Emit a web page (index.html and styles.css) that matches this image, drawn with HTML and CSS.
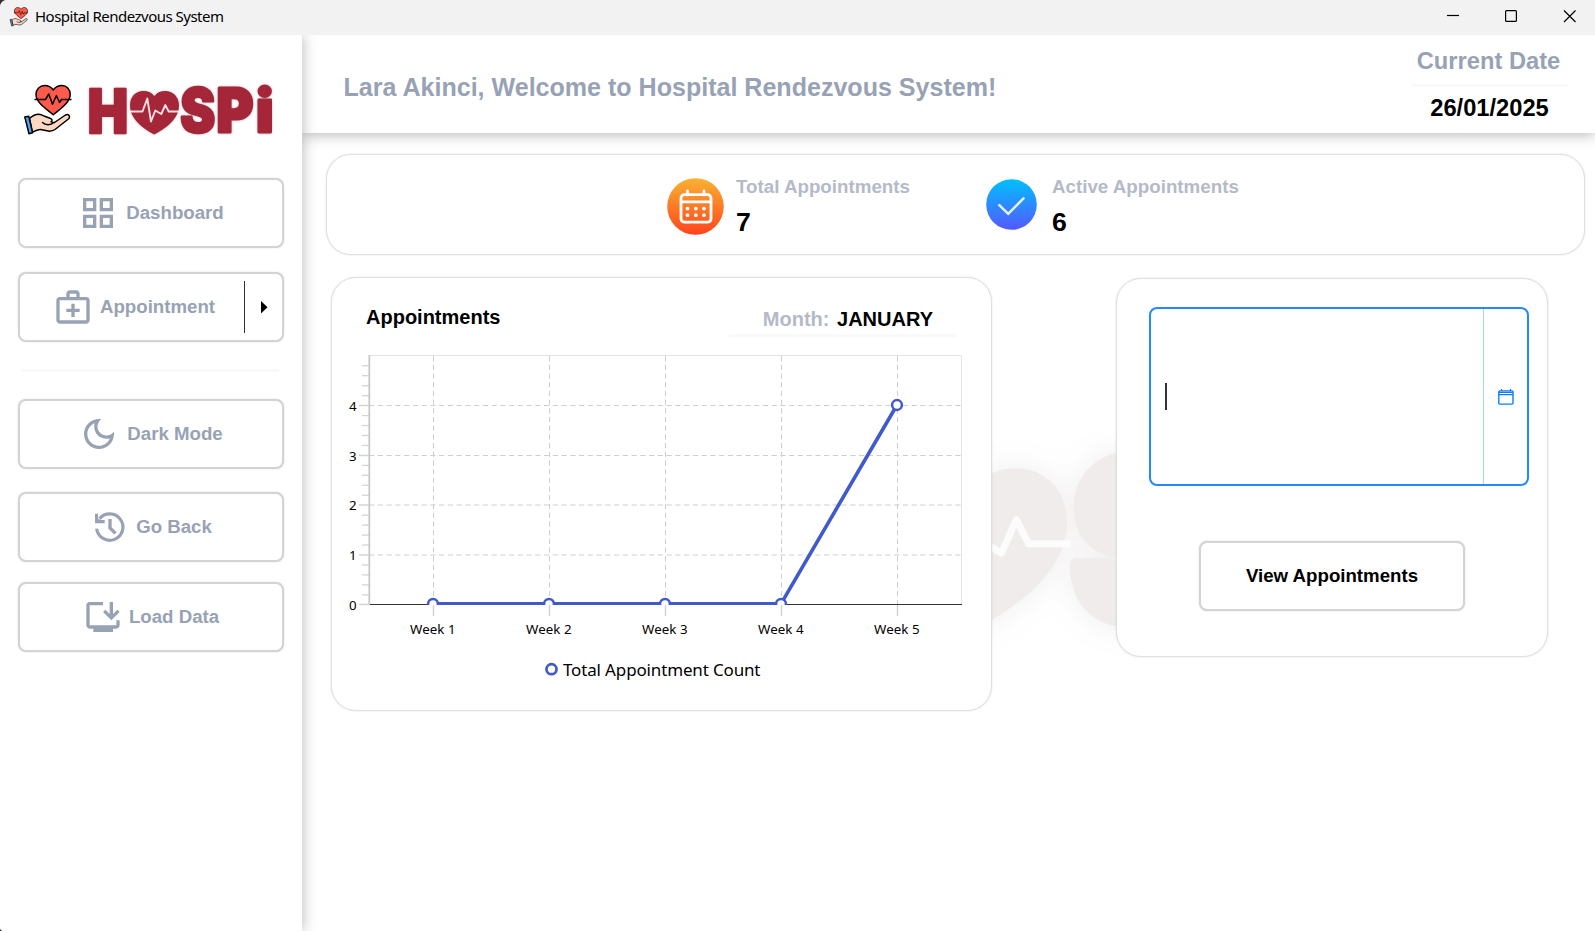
FILE: index.html
```html
<!DOCTYPE html>
<html lang="en">
<head>
<meta charset="utf-8">
<title>Hospital Rendezvous System</title>
<link rel="stylesheet" href="styles.css">
</head>
<body>
<svg class="defs" width="0" height="0" aria-hidden="true">
  <defs>
    <symbol id="hand-heart" viewBox="22 82 52 54">
      <path d="M53.3 114.8C48 110 36 103 36 94.500C36 89 40 85.600 44.500 85.600C48.500 85.600 51.500 87.500 53.300 90C55 87.500 58 85.600 62 85.600C66.500 85.600 70.200 89 70.200 94.500C70.200 103 58.500 110 53.300 114.800Z" fill="#ff5a4b" stroke="#000" stroke-width="1.500" stroke-linejoin="round"/>
      <path d="M34.500 99.500H45.500L48.800 94L52.500 104.200L56.400 95.500L59.500 102.500L61.500 99.500H71.500" fill="none" stroke="#000" stroke-width="1.500" stroke-linejoin="round"/>
      <path d="M29.500 118.500C35 113.500 40 113.300 44 116L50 118.200C52.500 119 52.600 121 51 121.800L54.500 122.500L65.500 115C68.500 113.500 70.500 116 69 118.500L55 129.500C52.500 131.200 50 131.500 47 130.800L40.500 129.500C37.500 129.300 34.500 131 32.300 132.200Z" fill="#fcd8c2" stroke="#000" stroke-width="1.500" stroke-linejoin="round"/>
      <path d="M42.500 122.500C45.500 125.500 50.500 125.500 54 122.500" fill="none" stroke="#000" stroke-width="1.500" stroke-linecap="round"/>
      <path d="M24.800 117L28.800 116.300L32.600 132.800L29 133.800Z" fill="#4aa5f5" stroke="#000" stroke-width="1.500" stroke-linejoin="round"/>
    </symbol>
    <g id="heart-pulse">
      <path fill="currentColor" d="M154.300 134.600C148 131 130 121.500 130 105.500C130 96.500 136 91.100 143.200 91.100C148 91.100 152.200 93 154.300 96.300C156.500 93 160.500 91.100 165.300 91.100C172.500 91.100 179 96.500 179 105.500C179 121.500 160.500 131 154.300 134.600Z"/>
      <path fill="none" stroke="#fff" stroke-opacity=".85" stroke-width="1.900" stroke-linejoin="round" d="M129 111.500H142.500L147.300 98.500L151 121.500L155.300 110.500L161.300 114L165.300 105L168.700 111.500H180"/>
    </g>
    <linearGradient id="orange" x1="0" y1="0" x2="0" y2="1"><stop offset="0" stop-color="#f9b233"/><stop offset="1" stop-color="#ff441c"/></linearGradient>
    <linearGradient id="blue" x1="0" y1="0" x2="0" y2="1"><stop offset="0" stop-color="#00c0ff"/><stop offset="1" stop-color="#5558ff"/></linearGradient>
  </defs>
</svg>
<div class="window">
  <div class="titlebar">
    <svg class="app-icon" viewBox="22 82 52 54"><use href="#hand-heart" x="22" y="82" width="52" height="54"/></svg>
    <svg class="app-title" width="200" height="34"><text x="0" y="22.300" textLength="189">Hospital Rendezvous System</text></svg>
    <svg class="controls" width="160" height="34" fill="none" stroke="#000" stroke-width="1.200">
      <path d="M12 15.500h12"/><rect x="70.600" y="10.600" width="10.800" height="10.800" rx="1"/><path d="M129 10.500l11.500 11.500M140.500 10.500L129 22"/>
    </svg>
  </div>
  <div class="app">
    <aside class="sidebar">
      <svg class="logo" viewBox="0 65 302 90" width="302" height="90">
        <use href="#hand-heart" x="22" y="82" width="52" height="54"/>
        <g class="wordmark">
          <text transform="translate(87.800 132.600) scale(.88 1)">H</text>
          <use href="#heart-pulse"/>
          <text transform="translate(180.300 132.300) scale(.86 .99)">S</text>
          <text class="heavy" transform="translate(216.500 132.300) scale(.92 1)">P</text>
          <text class="heavy" transform="translate(256 132.300) scale(.97 .96)">i</text>
        </g>
      </svg>
      <nav class="menu">
        <button class="btn"><svg class="ico" viewBox="0 0 24 24"><path d="M3 3v8h8V3H3zm6 6H5V5h4v4zm-6 4v8h8v-8H3zm6 6H5v-4h4v4zm4-16v8h8V3h-8zm6 6h-4V5h4v4zm-6 4v8h8v-8h-8zm6 6h-4v-4h4v4z"/></svg>Dashboard</button>
        <div class="btn split">
          <span class="split-label"><svg class="ico" viewBox="0 0 24 24"><path d="M20 6h-4V4c0-1.100-.9-2-2-2h-4c-1.100 0-2 .9-2 2v2H4c-1.100 0-2 .9-2 2v12c0 1.100.9 2 2 2h16c1.100 0 2-.9 2-2V8c0-1.100-.9-2-2-2zM10 4h4v2h-4V4zm10 16H4V8h16v12z"/><path d="M13 10h-2v3H8v2h3v3h2v-3h3v-2h-3z"/></svg>Appointment</span>
          <span class="split-arrow"><svg width="7" height="13"><path d="M0 0L6.500 6.300L0 12.600z" fill="#000"/></svg></span>
        </div>
        <div class="rule"></div>
        <button class="btn dark"><svg class="ico" viewBox="0 0 24 24"><path d="M9.370 5.510C9.190 6.150 9.100 6.820 9.100 7.500c0 4.080 3.320 7.400 7.400 7.400.68 0 1.350-.09 1.990-.27C17.450 17.190 14.930 19 12 19c-3.860 0-7-3.140-7-7 0-2.930 1.810-5.450 4.370-6.490zM12 3c-4.970 0-9 4.030-9 9s4.030 9 9 9 9-4.030 9-9c0-.46-.04-.92-.1-1.360-.98 1.370-2.580 2.260-4.400 2.260-2.980 0-5.400-2.420-5.400-5.400 0-1.810.89-3.420 2.260-4.400C12.920 3.040 12.460 3 12 3z"/></svg>Dark Mode</button>
        <button class="btn back"><svg class="ico" viewBox="0 0 24 24"><path d="M4 13A7.900 7.900 0 1 0 5.700 7.100" fill="none" stroke="currentColor" stroke-width="1.900"/><path d="M3 4h1.800v3.200L6.500 7.800H8.800V9.700H3z"/><path d="M12 7.200v5.400l3.300 3.200" fill="none" stroke="currentColor" stroke-width="2"/></svg>Go Back</button>
        <button class="btn load"><svg class="ico" viewBox="0 0 24 24"><path d="M20 17H4V5h8V3H4c-1.110 0-2 .89-2 2v12c0 1.100.89 2 2 2h3l-.7.800V21h11.700v-1.200L17 19h3c1.100 0 2-.9 2-2v-3h-2v3zM17 14l5-5-1.410-1.410L18 10.170V3h-2v7.170l-2.590-2.580L12 9l5 5z"/><path d="M6.300 18h11.700v3H6.300z"/></svg>Load Data</button>
      </nav>
    </aside>
    <main class="main">
      <header class="header">
        <h1>Lara Akinci, Welcome to Hospital Rendezvous System!</h1>
        <div class="date"><span class="date-label">Current Date</span><span class="date-rule"></span><span class="date-value">26/01/2025</span></div>
      </header>
      <div class="content">
        <svg class="watermark" viewBox="880 430 360 250" width="360" height="250">
          <g class="wm" transform="translate(1067 468) scale(3.700) translate(-179 -91)">
            <use href="#heart-pulse"/>
            <text transform="translate(179.600 132.300) scale(.86 .99)">S</text>
          </g>
        </svg>
        <section class="card stats">
          <div class="stat">
            <svg width="57" height="57" viewBox="0 0 57 57"><circle cx="28.500" cy="28.500" r="28.300" fill="url(#orange)"/><g fill="none" stroke="#fff" stroke-width="2.800"><rect x="14" y="16.600" width="30" height="27.600" rx="3.500"/><path d="M14 23.800h30M20.500 13v4M37 13v4" stroke-linecap="round"/></g><path d="M20.500 30.600h0M28.800 30.600h0M37 30.600h0M20.500 37.200h0M28.800 37.200h0M37 37.200h0" stroke="#fff" stroke-width="3.800" stroke-linecap="round"/></svg>
            <div class="stat-text"><span>Total Appointments</span><b>7</b></div>
          </div>
          <div class="stat second">
            <svg width="51" height="51" viewBox="0 0 51 51"><circle cx="25.500" cy="25.500" r="25.300" fill="url(#blue)"/><path d="M13.300 26.200l8.900 8.600L37.500 19.400" fill="none" stroke="#e6f4ff" stroke-width="2.500" stroke-linecap="round"/></svg>
            <div class="stat-text"><span>Active Appointments</span><b>6</b></div>
          </div>
        </section>
        <div class="row">
          <section class="card chart">
            <div class="chart-head"><h2>Appointments</h2><div class="month"><span>Month:</span> JANUARY</div></div>
            <svg id="plot" viewBox="332 345 659 350" width="659" height="350"></svg>
          </section>
          <section class="card picker">
            <div class="field"><div class="field-input"><i class="caret"></i></div><div class="field-btn"><svg width="16" height="16" viewBox="0 0 16 16" fill="none" stroke="#0a7cff"><rect x=".8" y="1.900" width="14.200" height="13.200" rx="1" stroke-width="1.400"/><path d="M1 3.300h14M1 5.700h14M3.500 0v2M12.500 0v2" stroke-width="1.200"/></svg></div></div>
            <button class="btn view">View Appointments</button>
          </section>
        </div>
      </div>
    </main>
  </div>
</div>
<script src="chart.js"></script>
</body>
</html>
```
FILE: styles.css
```css
* { box-sizing: border-box; }
body { margin: 0; background: #3a2c2c; font-family: "Liberation Sans", Arial, sans-serif; }
.defs { position: absolute; }
.window { width: 1595px; height: 931px; display: flex; flex-direction: column; overflow: hidden; border-radius: 7px 0 0 4px; background: #fff; }
.titlebar { height: 35px; flex: none; background: #f2f2f2; display: flex; align-items: flex-start; padding-left: 9px; position: relative; z-index: 3; }
.app-icon { width: 20px; height: 21px; margin-top: 6px; }
.app-title { margin-left: 6px; font: 15px "Noto Sans", "Open Sans", sans-serif; }
.controls { margin-left: auto; margin-right: 0; }
.app { flex: 1; display: flex; min-height: 0; }
.sidebar { width: 302px; flex: none; background: #fff; box-shadow: 0 0 14px rgba(0,0,0,.3); position: relative; z-index: 2; padding-top: 30px; }
.logo { display: block; overflow: visible; }
.wordmark { color: #a52639; fill: #a52639; filter: drop-shadow(0 0 1px rgba(60,0,10,.3)); }
.wordmark text, .wm text { font: 900 61px Inter, "Open Sans", sans-serif; stroke: currentColor; stroke-width: 2.500px; stroke-linejoin: round; fill: currentColor; }
.wordmark .heavy { stroke-width: 3px; }
.menu { display: flex; flex-direction: column; padding: 23px 0 0 18px; align-items: flex-start; }
.btn { width: 266px; height: 70px; padding: 0; background: #fff; border: 2px solid #d3d3d5; border-radius: 8px; box-shadow: 0 0 2px rgba(0,0,0,.14); color: #98a2b5; font: bold 18.670px "Liberation Sans", Arial, sans-serif; display: flex; align-items: center; justify-content: center; gap: 8px; }
.ico { width: 40px; height: 40px; fill: currentColor; flex: none; }
.split { margin-top: 24px; justify-content: flex-start; gap: 0; }
.split-label { display: flex; align-items: center; gap: 7px; width: 224px; padding-left: 33px; }
.split-arrow { height: 52px; width: 38px; border-left: 1px solid #333; display: flex; align-items: center; padding-left: 16px; }
.rule { width: 257px; height: 3px; margin: 27px 0 27px 4px; background: #f9f9f9; }
.back { margin-top: 23px; gap: 6px; }
.load { margin-top: 20px; gap: 6px; }
.main { flex: 1; display: flex; flex-direction: column; min-width: 0; }
.header { height: 98px; flex: none; background: #fff; box-shadow: 0 2px 13px rgba(0,0,0,.28); position: relative; z-index: 1; display: flex; justify-content: space-between; padding-left: 41.500px; padding-right: 27px; }
h1 { margin: 38px 0 0; font-size: 25.050px; line-height: 29px; color: #98a2b5; white-space: nowrap; }
.date { width: 157px; display: flex; flex-direction: column; align-items: center; font-weight: bold; font-size: 23.700px; line-height: 28px; padding-top: 12px; }
.date-label { color: #98a2b5; margin-left: -2px; }
.date-rule { width: 157px; height: 3px; background: #f9f9f9; margin: 9px 0 7px; }
.date-value { color: #000; }
.content { flex: 1; position: relative; padding: 21px 10px 0 24px; }
.watermark { position: absolute; left: 578px; top: 297px; }
.wm { color: #f0ecec; filter: drop-shadow(0 0 4px rgba(120,90,90,.1)); }
.wm text { stroke-width: 3px; }
.card { background: #fff; border: 1px solid #e0e0e0; border-radius: 25px; box-shadow: 0 0 2px rgba(0,0,0,.14); position: relative; }
.stats { height: 101px; display: flex; padding-left: 340px; }
.stat { display: flex; padding-top: 23px; gap: 12px; width: 319px; }
.stat > svg { margin-top: -.500px; }
.stat.second { gap: 15px; }
.stat.second > svg { margin-top: .500px; }
.stat-text { display: flex; flex-direction: column; white-space: nowrap; font-weight: bold; }
.stat-text span { font-size: 18.750px; line-height: 21px; color: #b4bac8; margin-top: -2px; }
.stat-text b { font-size: 26.670px; line-height: 30px; margin-top: 10px; }
.row { display: flex; align-items: flex-start; justify-content: space-between; padding: 22px 37px 0 5px; }
.chart { width: 661px; height: 434px; padding: 18px 0 0; }
.chart-head { height: 49px; display: flex; justify-content: space-between; padding: 0 35px 0 34px; }
h2 { margin: 10px 0 0; font-size: 20px; line-height: 23px; }
.month { width: 227px; height: 41px; padding: 12px 23px 0 0; border-bottom: 3px solid #f9f9f9; font-weight: bold; font-size: 20px; line-height: 23px; text-align: right; white-space: nowrap; }
.month span { color: #b4bac8; margin-right: 2px; }
#plot { display: block; font: 13.300px "Noto Sans", "Open Sans", sans-serif; }
.legend { font-size: 17px; }
.picker { width: 432px; height: 379px; margin-top: 1px; padding: 28px 0 0 32px; }
.field { width: 380px; height: 179px; border: 2px solid #2488ff; border-radius: 8px; display: flex; }
.field-input { width: 333px; border-right: 1px solid #a9d0fb; display: flex; align-items: center; padding: 0 0 0 14px; }
.caret { width: 1.500px; height: 27px; background: #333; }
.field-btn { flex: 1; display: flex; align-items: center; justify-content: center; padding-top: 1px; }
.view { color: #000; margin: 55px 0 0 50px; width: 266px; }
```
FILE: chart.js
```js
const plot = document.getElementById('plot');
const xs = [433.5, 549.5, 665.5, 781.5, 897.5];
const values = [0, 0, 0, 0, 4];
const gridY = [604.5, 555, 505, 455.5, 405.5];
const y0 = 604.8, unit = 49.8;
const yOf = v => y0 - v * unit;
let s = '';
const line = (x1, y1, x2, y2, extra) => `<line x1="${x1}" y1="${y1}" x2="${x2}" y2="${y2}" ${extra}/>`;
// frame and grid
s += line(369, 355.5, 962, 355.5, 'stroke="#e2e2e2"') + line(961.5, 355, 961.5, 604, 'stroke="#e6e6e6"');
xs.forEach(x => {
  s += line(x, 356, x, 604, 'stroke="#cfcfd3" stroke-dasharray="5.3 3.4"');
  s += line(x, 605, x, 616, 'stroke="#d0d0d0" stroke-width="1.4"');
});
gridY.forEach((y, v) => {
  if (v) s += line(369, y, 961, y, 'stroke="#cfcfd3" stroke-width="1.2" stroke-dasharray="5.300 3.450"');
  s += line(359, y, 369, y, 'stroke="#d4d4d4" stroke-width="1.5"');
  s += `<text x="356.500" y="${y + 5}" text-anchor="end">${v}</text>`;
});
for (let i = 1; i < 25; i++) if (i % 5) s += line(362, yOf(i / 5), 369, yOf(i / 5), 'stroke="#d4d4d4" stroke-width="1.3"');
s += line(369.3, 355, 369.3, 605, 'stroke="#c8c8c8" stroke-width="1.8"');
s += line(370, 604.5, 962, 604.5, 'stroke="#333"');
// series, cut off at the zero line
s += '<clipPath id="area"><rect x="369" y="355" width="593" height="250"/></clipPath><g clip-path="url(#area)" stroke="#4059cb">';
const pts = values.map((v, i) => [xs[i] - .5, 603.8 - v * 49.7]);
s += `<polyline points="${pts.join(' ')}" fill="none" stroke-width="3.6"/>`;
pts.forEach(p => { s += `<circle cx="${p[0]}" cy="${p[1]}" r="4.900" fill="#fff" stroke-width="2.500"/>`; });
s += '</g>';
xs.forEach((x, i) => { s += `<text x="${x - 23.5}" y="634" textLength="45.500">Week ${i + 1}</text>`; });
s += '<circle cx="551.500" cy="669.200" r="5" fill="#fff" stroke="#4059cb" stroke-width="2.700"/>';
s += '<text class="legend" x="563" y="675.700" textLength="197.500">Total Appointment Count</text>';
plot.innerHTML = s;
```
